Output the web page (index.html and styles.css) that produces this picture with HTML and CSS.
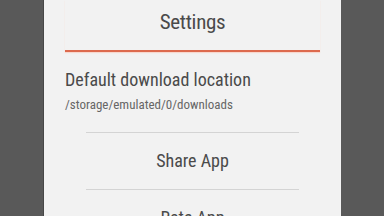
FILE: index.html
```html
<!DOCTYPE html>
<html lang="en">
<head>
  <meta charset="UTF-8">
  <meta name="viewport" content="width=device-width, initial-scale=1.0">
  <title>Settings</title>
  <link rel="stylesheet" href="styles.css">
</head>
<body>

  <div class="dialog">
    <div class="dialog-header">
      <h2>Settings</h2>
    </div>

    <div class="option">
      <div class="option-title">Default download location</div>
      <div class="option-sub">/storage/emulated/0/downloads</div>
    </div>

    <div class="divider"></div>
    <div class="action">Share App</div>
    <div class="divider"></div>
    <div class="action">Rate App</div>
  </div>

</body>
</html>
```

FILE: styles.css
```css
body {
  margin: 0;
  background: #595959;
  font-family: "Roboto Condensed", "Liberation Sans Narrow", Roboto, sans-serif;
  font-stretch: condensed;
  color: #4a4a4a;
  display: flex;
  justify-content: center;
  height: 216px;
  overflow: hidden;
}

.dialog {
  width: 297px;
  background: #f2f2f2;
  border-left: 1px solid #474747;
  height: 216px;
  overflow: hidden;
}

.dialog-header {
  margin: 0 21px;
  height: 50px;
  border-bottom: 2px solid #dd6a4e;
  box-shadow: 0 1px 1px #f8d8cf;
}

.dialog-header h2 {
  margin: 0;
  padding-top: 9px;
  font-size: 21px;
  font-weight: normal;
  line-height: 26px;
  letter-spacing: -0.3px;
  text-align: center;
}

.option {
  padding: 17px 21px 0;
  height: 63px;
}

.option-title {
  font-size: 18px;
  line-height: 22px;
}

.option-sub {
  margin-top: 6px;
  font-size: 13px;
  line-height: 15px;
  color: #666;
}

.divider {
  margin: 0 42px;
  height: 1px;
  background: #d4d4d4;
}

.action {
  height: 56px;
  font-size: 18px;
  line-height: 56px;
  text-align: center;
}
```
